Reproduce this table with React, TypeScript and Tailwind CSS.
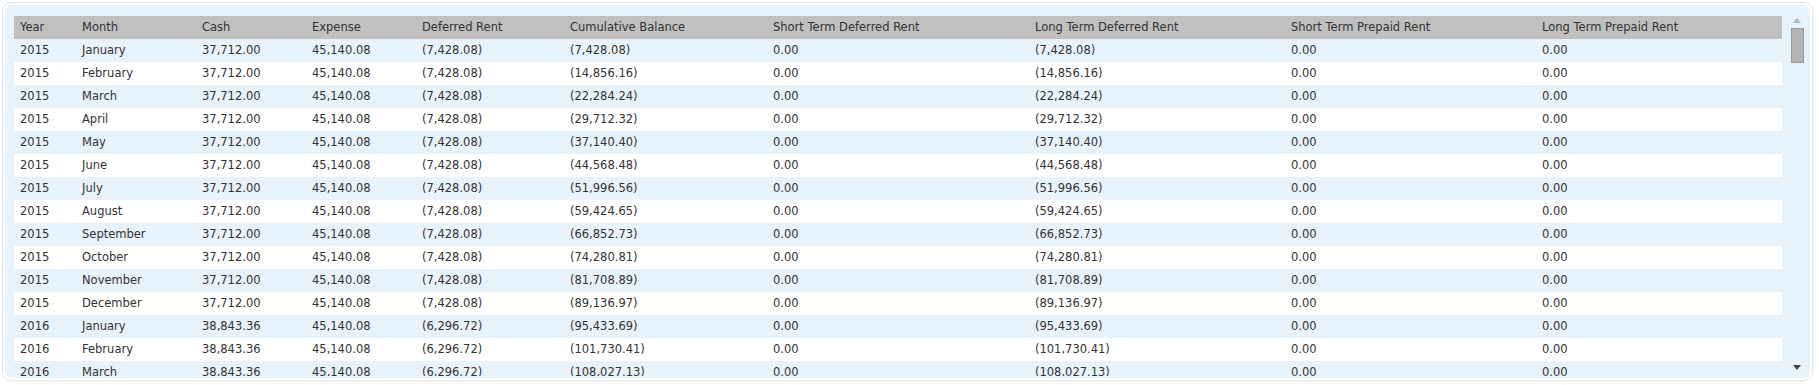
const columns = [
  { label: 'Year', w: 'w-[62px]' },
  { label: 'Month', w: 'w-[120px]' },
  { label: 'Cash', w: 'w-[110px]' },
  { label: 'Expense', w: 'w-[110px]' },
  { label: 'Deferred Rent', w: 'w-[148px]' },
  { label: 'Cumulative Balance', w: 'w-[203px]' },
  { label: 'Short Term Deferred Rent', w: 'w-[262px]' },
  { label: 'Long Term Deferred Rent', w: 'w-[256px]' },
  { label: 'Short Term Prepaid Rent', w: 'w-[251px]' },
  { label: 'Long Term Prepaid Rent', w: 'w-[246px]' },
];

const rows: [string, string, string, string, string][] = [
  ['2015', 'January', '37,712.00', '(7,428.08)', '(7,428.08)'],
  ['2015', 'February', '37,712.00', '(7,428.08)', '(14,856.16)'],
  ['2015', 'March', '37,712.00', '(7,428.08)', '(22,284.24)'],
  ['2015', 'April', '37,712.00', '(7,428.08)', '(29,712.32)'],
  ['2015', 'May', '37,712.00', '(7,428.08)', '(37,140.40)'],
  ['2015', 'June', '37,712.00', '(7,428.08)', '(44,568.48)'],
  ['2015', 'July', '37,712.00', '(7,428.08)', '(51,996.56)'],
  ['2015', 'August', '37,712.00', '(7,428.08)', '(59,424.65)'],
  ['2015', 'September', '37,712.00', '(7,428.08)', '(66,852.73)'],
  ['2015', 'October', '37,712.00', '(7,428.08)', '(74,280.81)'],
  ['2015', 'November', '37,712.00', '(7,428.08)', '(81,708.89)'],
  ['2015', 'December', '37,712.00', '(7,428.08)', '(89,136.97)'],
  ['2016', 'January', '38,843.36', '(6,296.72)', '(95,433.69)'],
  ['2016', 'February', '38,843.36', '(6,296.72)', '(101,730.41)'],
  ['2016', 'March', '38,843.36', '(6,296.72)', '(108,027.13)'],
];

export default function App() {
  return (
    <div className="w-[1819px] h-[385px] bg-white p-[2px] font-['DejaVu_Sans',Verdana,sans-serif] text-[11.5px] text-[#333]">
      <div className="w-[1811px] h-[379px] rounded-[9px] border border-[#dde6ef] bg-white p-[2px]">
        <div className="flex h-full rounded-[7px] bg-[#e8f2fb] pl-[9px] pt-[11px]">
          <div className="h-[360px] w-[1768px] overflow-hidden">
            <table className="table-fixed w-[1768px] border-collapse">
              <thead>
                <tr className="h-[23px] bg-[#c0c0c0]">
                  {columns.map((c) => (
                    <th key={c.label} className={`${c.w} pl-[6px] pr-[4px] pt-[1px] text-left font-normal`}>
                      {c.label}
                    </th>
                  ))}
                </tr>
              </thead>
              <tbody>
                {rows.map((r, i) => {
                  const cells = [r[0], r[1], r[2], '45,140.08', r[3], r[4], '0.00', r[4], '0.00', '0.00'];
                  return (
                    <tr key={i} className={`h-[23px] ${i % 2 === 0 ? 'bg-[#e8f2fb]' : 'bg-white'}`}>
                      {cells.map((v, j) => (
                        <td key={j} className="pl-[6px] pr-[4px] pt-[1px] whitespace-nowrap">{v}</td>
                      ))}
                    </tr>
                  );
                })}
              </tbody>
            </table>
          </div>
          <div className="flex w-[27px] flex-col items-center pl-[3px] pb-[8px]">
            <svg width="8" height="5" viewBox="0 0 8 5" className="mt-[2px]">
              <path d="M4 0 L8 5 L0 5 Z" fill="#b5b5b5" />
            </svg>
            <div className="mt-[5px] h-[35px] w-[13px] border border-[#9a9a9a] bg-[#b3b3b3]" />
            <div className="flex-1" />
            <svg width="8" height="5" viewBox="0 0 8 5">
              <path d="M0 0 L8 0 L4 5 Z" fill="#444" />
            </svg>
          </div>
        </div>
      </div>
    </div>
  );
}
